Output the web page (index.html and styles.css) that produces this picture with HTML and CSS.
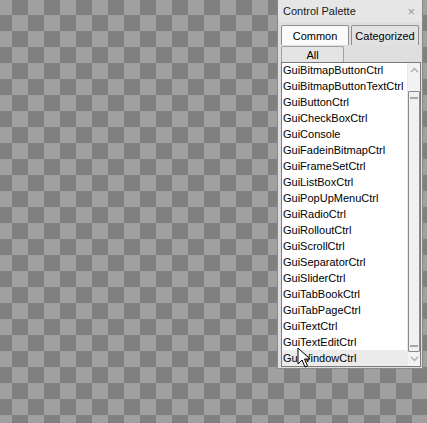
FILE: index.html
```html
<!DOCTYPE html>
<html>
<head>
<meta charset="utf-8">
<link rel="stylesheet" href="styles.css">
</head>
<body>
<div class="canvas">
  <div class="panel">
    <div class="titlebar">
      <span class="title">Control Palette</span>
      <span class="close">×</span>
    </div>
    <div class="tabs">
      <div class="tab active">Common</div>
      <div class="tab">Categorized</div>
    </div>
    <div class="allrow"><div class="allbtn">All</div></div>
    <div class="listbox">
      <div class="items">
        <div class="item first">GuiBitmapButtonCtrl</div>
        <div class="item">GuiBitmapButtonTextCtrl</div>
        <div class="item">GuiButtonCtrl</div>
        <div class="item">GuiCheckBoxCtrl</div>
        <div class="item">GuiConsole</div>
        <div class="item">GuiFadeinBitmapCtrl</div>
        <div class="item">GuiFrameSetCtrl</div>
        <div class="item">GuiListBoxCtrl</div>
        <div class="item">GuiPopUpMenuCtrl</div>
        <div class="item">GuiRadioCtrl</div>
        <div class="item">GuiRolloutCtrl</div>
        <div class="item">GuiScrollCtrl</div>
        <div class="item">GuiSeparatorCtrl</div>
        <div class="item">GuiSliderCtrl</div>
        <div class="item">GuiTabBookCtrl</div>
        <div class="item">GuiTabPageCtrl</div>
        <div class="item">GuiTextCtrl</div>
        <div class="item">GuiTextEditCtrl</div>
        <div class="item hover">GuiWindowCtrl</div>
      </div>
      <div class="scrollbar">
        <div class="arrow up"><svg width="9" height="6" viewBox="0 0 9 6"><path d="M1 5 L4.5 1.5 L8 5" fill="none" stroke="#b0b0b0" stroke-width="1.5"/></svg></div>
        <div class="track">
          <div class="thumb"><span class="grip"></span><span class="grip"></span></div>
        </div>
        <div class="arrow down"><svg width="9" height="6" viewBox="0 0 9 6"><path d="M1 1 L4.5 4.5 L8 1" fill="none" stroke="#b0b0b0" stroke-width="1.5"/></svg></div>
      </div>
    </div>
  </div>
  <svg class="cursor" width="14" height="22" viewBox="0 0 14 22"><path d="M1 1 L1 17 L5 13 L8 20 L10.5 19 L7.5 12 L13 12 Z" fill="#fff" stroke="#000" stroke-width="1" stroke-linejoin="miter"/></svg>
</div>
</body>
</html>
```
FILE: styles.css
```css
html, body {
  margin: 0;
  padding: 0;
}
body {
  width: 427px;
  height: 423px;
  overflow: hidden;
  background-color: #a0a0a0;
  background-image:
    linear-gradient(45deg, #808080 25%, transparent 25%, transparent 75%, #808080 75%),
    linear-gradient(45deg, #808080 25%, transparent 25%, transparent 75%, #808080 75%);
  background-size: 32px 32px;
  background-position: -4px -1px, 12px 15px;
  font-family: "Liberation Sans", Arial, sans-serif;
  font-size: 11px;
  color: #000;
}
.canvas {
  position: relative;
  width: 427px;
  height: 423px;
  display: flex;
  justify-content: flex-end;
  align-items: flex-start;
}
.panel {
  width: 146px;
  height: 369px;
  margin-right: 4px;
  box-sizing: border-box;
  border: 1px solid #8a8a8a;
  border-top: none;
  background: #dedede;
  display: flex;
  flex-direction: column;
}
.titlebar {
  height: 22px;
  background: #e6e6e6;
  display: flex;
  align-items: center;
  justify-content: space-between;
  padding: 0 7px 0 5px;
  flex: none;
}
.title {
  font-size: 11px;
  color: #1a1a1a;
}
.close {
  font-size: 13px;
  color: #999;
  line-height: 1;
}
.tabs {
  display: flex;
  gap: 2px;
  padding: 3px 3px 0 3px;
  height: 20px;
  flex: none;
}
.tab {
  width: 68px;
  box-sizing: border-box;
  border: 1px solid #8e8e8e;
  border-bottom: none;
  border-radius: 2px 2px 0 0;
  background: #e2e2e2;
  display: flex;
  align-items: center;
  justify-content: center;
  font-size: 11px;
}
.tab.active {
  background: #fafafa;
}
.allrow {
  padding: 1px 3px 0 3px;
  height: 16px;
  flex: none;
  display: flex;
}
.allbtn {
  width: 63px;
  box-sizing: border-box;
  border: 1px solid #a0a0a0;
  border-bottom: none;
  border-radius: 2px 2px 0 0;
  background: #e4e4e4;
  display: flex;
  align-items: center;
  justify-content: center;
}
.listbox {
  margin: 0 1px 0 3px;
  height: 305px;
  box-sizing: border-box;
  border: 1px solid #7a7a7a;
  background: #fff;
  display: flex;
  overflow: hidden;
  flex: none;
}
.items {
  flex: 1;
  overflow: hidden;
}
.item {
  height: 16px;
  line-height: 16px;
  padding-left: 1px;
  white-space: nowrap;
  font-size: 11px;
}
.item.first {
  margin-top: -1px;
}
.item.hover {
  background: #ebebeb;
}
.scrollbar {
  width: 12px;
  flex: none;
  display: flex;
  flex-direction: column;
  background: #f2f2f2;
  border-left: 1px solid #e8e8e8;
}
.arrow {
  height: 14px;
  display: flex;
  align-items: center;
  justify-content: center;
  flex: none;
}
.track {
  flex: 1;
  padding: 14px 0 0 0;
  display: flex;
}
.thumb {
  flex: 1;
  box-sizing: border-box;
  border: 1px solid #8a8a8a;
  border-radius: 1px;
  background: #f0f0f0;
  display: flex;
  flex-direction: column;
  justify-content: space-between;
  align-items: center;
  padding: 5px 0 4px;
}
.grip {
  width: 8px;
  height: 2px;
  background: #a8a8a8;
}
.cursor {
  position: absolute;
  left: 297px;
  top: 347px;
}
```
